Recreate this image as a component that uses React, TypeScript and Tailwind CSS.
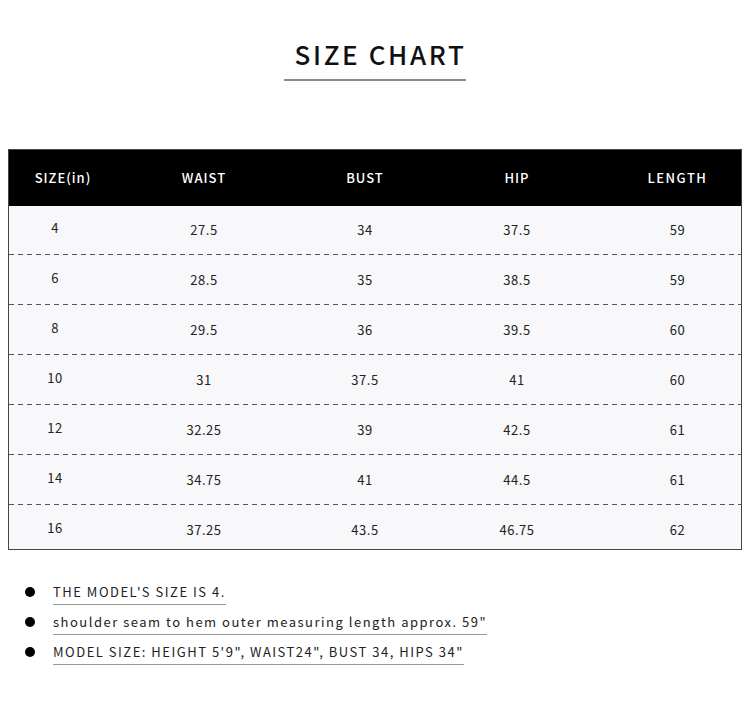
import React from "react";

const rows = [
  ["4", "27.5", "34", "37.5", "59"],
  ["6", "28.5", "35", "38.5", "59"],
  ["8", "29.5", "36", "39.5", "60"],
  ["10", "31", "37.5", "41", "60"],
  ["12", "32.25", "39", "42.5", "61"],
  ["14", "34.75", "41", "44.5", "61"],
  ["16", "37.25", "43.5", "46.75", "62"],
];

const heights = ["h-[48px] pt-[14px]", "h-[49px] pt-[15px]", "h-[49px] pt-[15px]", "h-[49px] pt-[15px]", "h-[49px] pt-[15px]", "h-[49px] pt-[15px]", "h-[44px] pt-[15px]"];

const font = { fontFamily: '"Noto Sans CJK SC", "Noto Sans", sans-serif' };

export default function App() {
  return (
    <div className="w-[750px] h-[728px] bg-white relative" style={font}>
      <div className="flex justify-center pt-[36px]">
        <div className="pl-[11px] pr-0 pb-[7px] border-b-2 border-[#8a8a8a]">
          <div className="text-[26px] leading-[36px] tracking-[2.6px] text-[#111] font-medium">SIZE CHART</div>
        </div>
      </div>

      <div className="mx-[8px] mt-[68px] w-[734px] border border-[#444] bg-[#f8f8fa]">
        <div className="grid grid-cols-[108px_174px_148px_156px_1fr] h-[56px] items-center bg-black text-white text-[13px] tracking-[1px] font-medium">
          <div className="text-center">SIZE(in)</div>
          <div className="text-center">WAIST</div>
          <div className="text-center">BUST</div>
          <div className="text-center">HIP</div>
          <div className="text-center pl-[19px] tracking-[1.5px]">LENGTH</div>
        </div>
        {rows.map((r, i) => (
          <div key={i}>
            <div className={`grid grid-cols-[108px_174px_148px_156px_1fr] items-start leading-[20px] text-[13px] text-[#222] tracking-[0.5px] ${heights[i]}`}>
              <div className="text-center pr-[16px] -translate-y-[2px]">{r[0]}</div>
              <div className="text-center">{r[1]}</div>
              <div className="text-center">{r[2]}</div>
              <div className="text-center">{r[3]}</div>
              <div className="text-center pl-[19px]">{r[4]}</div>
            </div>
            {i < rows.length - 1 && (
              <div className="h-px bg-[linear-gradient(to_right,#555_5px,transparent_5px)] bg-[length:9px_1px]" />
            )}
          </div>
        ))}
      </div>

      <div className="mt-[31px] flex flex-col gap-[8px] pl-[25px] text-[13px] text-[#222] tracking-[1.5px]">
        {[
          "THE MODEL'S SIZE IS 4.",
          'shoulder seam to hem outer measuring length approx. 59"',
          'MODEL SIZE: HEIGHT 5\'9", WAIST24", BUST 34, HIPS 34"',
        ].map((t, i) => (
          <div key={i} className="flex items-center h-[22px]">
            <div className="w-[10px] h-[10px] rounded-full bg-black shrink-0" />
            <div className="ml-[18px] border-b border-[#999] leading-[20px] pb-[2px] translate-y-[1px]">{t}</div>
          </div>
        ))}
      </div>
    </div>
  );
}
